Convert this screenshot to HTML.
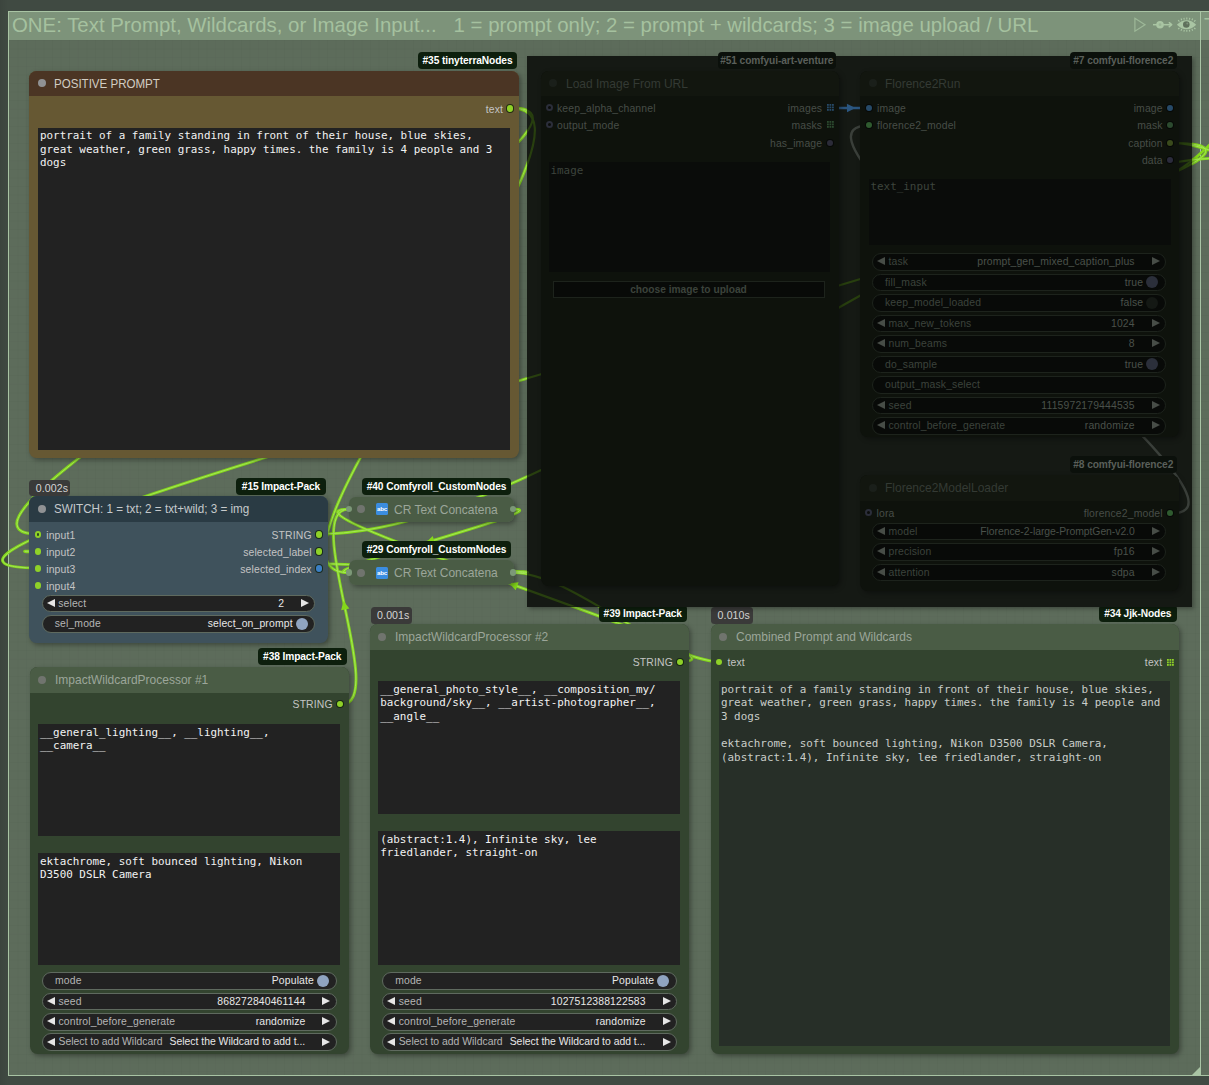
<!DOCTYPE html>
<html lang="en">
<head>
<meta charset="utf-8">
<title>ComfyUI workflow</title>
<style>
*{box-sizing:border-box;margin:0;padding:0}
html,body{width:1209px;height:1085px;overflow:hidden}
body{position:relative;font-family:"Liberation Sans",Arial,sans-serif;background:#3f4842;color:#ddd}
#canvas{position:absolute;left:0;top:0;width:1209px;height:1085px;overflow:hidden;
 background:linear-gradient(90deg,#3c453e 0,#404a42 8px,#404a42 100%)}
.group{position:absolute;background:#5d6c5b;border:1px solid #a9c4a4}
.group .gt{position:absolute;left:0;top:0;right:0;height:28px;background:#7d937a}
.group .gtxt{position:absolute;left:3px;top:-1px;font-size:20.4px;line-height:28px;color:#a5c19f;white-space:pre}
.grid{position:absolute;left:0;top:0;right:0;bottom:0;
 background-image:linear-gradient(rgba(0,0,0,.02) 1px,transparent 1px),linear-gradient(90deg,rgba(0,0,0,.02) 1px,transparent 1px);
 background-size:8.6px 8.6px}
.node{position:absolute;border-radius:7.5px;box-shadow:2px 2px 5px rgba(0,0,0,.35)}
.node .title{position:absolute;left:0;top:0;right:0;height:25.5px;border-radius:7.5px 7.5px 0 0}
.node.col{border-radius:6.5px}
.node.col .title{border-radius:6.5px;height:25.3px}
.node.col .title .dot{left:8.6px;background:#6e6e6a}
.node.grn .title .tt{color:#9ca69a}
.node.grn .title .dot{background:#70746e}
.node .title .dot{position:absolute;left:8.7px;top:8.7px;width:8px;height:8px;border-radius:50%;background:#909294}
.node .title .tt{position:absolute;left:25px;top:0;line-height:26px;font-size:12.7px;color:#c2c2c2;white-space:nowrap;display:inline-block;transform:scaleX(.945);transform-origin:0 50%}
.slot{position:absolute;font-size:10.4px;line-height:12px;color:#c4c4c4;white-space:nowrap;letter-spacing:.15px}
.slot.r{text-align:right}
.sd.in{width:6.4px;height:6.4px;margin:.3px;box-shadow:none}
.sd{position:absolute;width:7px;height:7px;border-radius:50%;background:#8fd128;box-shadow:0 0 0 1px rgba(14,30,8,.75);width:6.2px;height:6.2px;margin:.4px}
.ta{position:absolute;background:#222;color:#f2f2f2;font-family:"DejaVu Sans Mono","Liberation Mono",monospace;font-size:10.9px;line-height:13.6px;padding:1.6px 2px;white-space:pre;overflow:hidden}
.w{position:absolute;height:17.5px;border-radius:9px;background:#222;border:1px solid #5f6a5f;font-size:10.4px;line-height:15.5px;color:#b5b5b5;white-space:nowrap;letter-spacing:.15px}
.w .l{position:absolute;left:15.5px;top:0}
.w.t .l{left:12px}
.w .v{position:absolute;right:30px;top:0;color:#e8e8e8}
.w .al,.w .ar{position:absolute;top:3.3px;width:0;height:0;border-top:4.5px solid transparent;border-bottom:4.5px solid transparent}
.w .al{left:4.2px;border-right:8.5px solid #e6e6e6}
.w .ar{right:5.2px;border-left:8.5px solid #e6e6e6}
.w.t .v{right:21.5px}
.w .tg{position:absolute;right:6.5px;top:1.7px;width:12px;height:12px;border-radius:50%;background:#8fa3c0}
.badge{position:absolute;height:17px;border-radius:4px;background:#0d1f0d;color:#fff;font-size:10.2px;font-weight:bold;line-height:17px;text-align:center;white-space:nowrap;letter-spacing:-.1px}
.time{position:absolute;height:16.5px;border-radius:3.5px;background:#3a3a39;color:#d4d4d4;font-size:10.6px;line-height:16px;text-align:left;padding-left:6.6px;white-space:nowrap;letter-spacing:.1px}
.dim .title .tt{color:#343a34}
.dim .title .dot{background:#1a1f1a}
.dim .slot{color:#474d47}
.dim .sd{box-shadow:0 0 0 1px #070907;width:6px;height:6px;margin:.5px}
.dim .w{background:#080a08;border-color:#1d231c;color:#3c433c}
.dim .w .v{color:#4a514a}
.dim .w .al{border-right-color:#474d47}
.dim .w .ar{border-left-color:#474d47}
.dim .w .tg{background:#2b2f3a}
.dim .ta{background:#0a0c0a;color:#3d443d}
</style>
</head>
<body>
<div id="canvas">
<div class="group" style="left:8px;top:11px;width:1193px;height:1065px">
 <div class="grid" style="top:28px"></div>
 <div class="gt"></div>
 <div class="gtxt">ONE: Text Prompt, Wildcards, or Image Input...   1 = prompt only; 2 = prompt + wildcards; 3 = image upload / URL</div>
 <svg width="70" height="20" viewBox="1130 15 70 20" style="position:absolute;left:1121px;top:3px" fill="none">
<path d="M1134.9 18.3L1145 24.7L1134.9 31.2Z" stroke="#9db898" stroke-width="1.2" stroke-linejoin="miter"/>
<path d="M1153 24.7H1171" stroke="#a9c5a3" stroke-width="1.5"/>
<path d="M1169.3 22.7L1171.7 24.7L1169.3 26.7" stroke="#a9c5a3" stroke-width="1.5" stroke-linecap="round" stroke-linejoin="round"/>
<circle cx="1160" cy="24.7" r="3.8" fill="#a9c5a3"/>
<circle cx="1160" cy="24.7" r="1.4" fill="#98b393"/>
<g stroke="#a9c5a3" stroke-width="1.1" stroke-linecap="butt">
<path d="M1179.4 21.6L1178.2 20.2M1181.8 20.3L1181 18.6M1184.3 19.6L1183.9 17.8M1186.8 19.4V17.6M1189.4 19.6L1189.8 17.8M1191.9 20.3L1192.7 18.6M1194.2 21.6L1195.4 20.2"/>
<path d="M1179.4 27.8L1178.2 29.2M1181.8 29.1L1181 30.8M1184.3 29.8L1183.9 31.6M1186.8 30V31.8M1189.4 29.8L1189.8 31.6M1191.9 29.1L1192.7 30.8M1194.2 27.8L1195.4 29.2"/>
</g>
<path d="M1176.9 24.7C1180 21.4 1183.3 20.2 1186.6 20.2C1189.9 20.2 1193.2 21.4 1196.2 24.7C1193.2 28 1189.9 29.2 1186.6 29.2C1183.3 29.2 1180 28 1176.9 24.7Z" fill="#a9c5a3"/>
<circle cx="1186.3" cy="24.5" r="3.3" fill="#5f705c"/>
<circle cx="1187.3" cy="23.5" r="1" fill="#7d927a"/>
</svg>

 <div style="position:absolute;right:0;bottom:0;width:0;height:0;border-left:8.5px solid transparent;border-bottom:8.5px solid #a9c4a4"></div>
</div>
<div class="group" style="left:1201px;top:11px;width:40px;height:1065px;border-left:none">
 <div class="grid" style="top:28px"></div>
 <div class="gt"></div>
 <div class="gtxt">T</div>
</div>
<svg width="1209" height="1085" viewBox="0 0 1209 1085" style="position:absolute;left:0;top:0;" fill="none" stroke-linecap="round"><g stroke="#84d81a" stroke-width="2.8"><path d="M511.5 108.0C670.7 108.0 -121.2 534.0 38.0 534.0"/><path d="M511.5 108.0C634.6 108.0 225.4 572.7 348.5 572.7"/><path d="M341.0 704.5C389.9 704.5 299.6 509.2 348.5 509.2"/><path d="M681.0 661.5C772.4 661.5 257.1 509.2 348.5 509.2"/><path d="M514.5 509.2C558.9 509.2 304.1 572.7 348.5 572.7"/><path d="M514.5 572.7C633.7 572.7 -81.2 551.0 38.0 551.0"/><path d="M514.5 572.7C570.4 572.7 663.6 661.5 719.5 661.5"/><path d="M1170.5 143.0C1472.9 143.0 -264.4 568.0 38.0 568.0"/><path d="M320.5 534.0C564.7 534.0 977.8 158.0 1222.0 158.0"/><path d="M1170.5 143.0C1339.0 143.0 1531.5 560.0 1700.0 560.0"/><path d="M1150 186Q1192 166 1216 138"/></g><g stroke="#a4e45a" stroke-width="1.0"><path d="M511.5 108.0C670.7 108.0 -121.2 534.0 38.0 534.0"/><path d="M511.5 108.0C634.6 108.0 225.4 572.7 348.5 572.7"/><path d="M341.0 704.5C389.9 704.5 299.6 509.2 348.5 509.2"/><path d="M681.0 661.5C772.4 661.5 257.1 509.2 348.5 509.2"/><path d="M514.5 509.2C558.9 509.2 304.1 572.7 348.5 572.7"/><path d="M514.5 572.7C633.7 572.7 -81.2 551.0 38.0 551.0"/><path d="M514.5 572.7C570.4 572.7 663.6 661.5 719.5 661.5"/><path d="M1170.5 143.0C1472.9 143.0 -264.4 568.0 38.0 568.0"/><path d="M320.5 534.0C564.7 534.0 977.8 158.0 1222.0 158.0"/><path d="M1170.5 143.0C1339.0 143.0 1531.5 560.0 1700.0 560.0"/></g><g fill="#84d81a" stroke="none"><polygon points="274.5,316.1 269.8,324.3 279.2,323.1"/><polygon points="427.7,336.0 426.9,345.4 435.0,340.4"/><polygon points="349.4,608.5 343.5,601.0 341.1,610.2"/><polygon points="518.6,582.2 509.2,583.3 515.7,590.2"/><polygon points="432.7,536.1 425.8,542.7 435.2,544.3"/><polygon points="279.0,557.7 270.3,561.6 278.6,566.2"/><polygon points="612.6,619.4 622.1,620.1 617.0,612.1"/><polygon points="605.5,350.7 598.5,357.2 607.9,358.9"/><polygon points="771.1,351.0 776.4,343.0 766.9,343.6"/><polygon points="1430.4,352.4 1439.1,356.0 1436.8,346.8"/></g></svg>

<div class="node " style="left:29.2px;top:70.5px;width:490.2px;height:387.5px;background:#665833"><div class="title" style="background:#4b3524"><span class="dot"></span><span class="tt" style="transform:scaleX(.91);color:#d2cdc3">POSITIVE PROMPT</span></div><span class="sd" style="left:477.7px;top:34.5px;background:#8fd128"></span><span class="slot r" style="right:16.3px;top:33.0px">text</span><div class="ta" style="left:8.8px;top:57px;width:471.8px;height:322.5px;">portrait of a family standing in front of their house, blue skies,
great weather, green grass, happy times. the family is 4 people and 3
dogs</div></div>
<div class="badge" style="left:418px;top:52px;width:99px;">#35 tinyterraNodes</div>
<div class="node " style="left:29.2px;top:496px;width:298.8px;height:146.5px;background:#3f525c"><div class="title" style="background:#2a3b44"><span class="dot"></span><span class="tt" style="transform:scaleX(.92);color:#c6cacc">SWITCH: 1 = txt; 2 = txt+wild; 3 = img</span></div><span class="sd in" style="left:5.5px;top:35px;background:#8fd128;"></span><span class="slot" style="left:17px;top:33.5px">input1</span><span style="position:absolute;left:7.6px;top:37.2px;width:2.6px;height:2.6px;border-radius:50%;background:#2a4a1a"></span><span class="sd in" style="left:5.5px;top:52px;background:#8fd128;"></span><span class="slot" style="left:17px;top:50.5px">input2</span><span class="sd in" style="left:5.5px;top:69px;background:#8fd128;"></span><span class="slot" style="left:17px;top:67.5px">input3</span><span class="sd in" style="left:5.5px;top:86px;background:#8fd128;"></span><span class="slot" style="left:17px;top:84.5px">input4</span><span class="sd" style="left:286.0px;top:35px;background:#8fd128"></span><span class="slot r" style="right:16.3px;top:33.5px">STRING</span><span class="sd" style="left:286.0px;top:52px;background:#8fd128"></span><span class="slot r" style="right:16.3px;top:50.5px">selected_label</span><span class="sd" style="left:286.0px;top:69px;background:#3b7fc4"></span><span class="slot r" style="right:16.3px;top:67.5px">selected_index</span><div class="w" style="left:12.5px;top:98.5px;width:273.5px"><i class="al"></i><span class="l">select</span><span class="v">2</span><i class="ar"></i></div><div class="w t" style="left:12.5px;top:119px;width:273.5px"><span class="l">sel_mode</span><span class="v">select_on_prompt</span><i class="tg"></i></div></div>
<div class="badge" style="left:236px;top:478px;width:90px;">#15 Impact-Pack</div>
<div class="time" style="left:29.2px;top:479.5px;width:41px">0.002s</div>
<div class="node col grn" style="left:348.5px;top:496.6px;width:165.5px;height:25.3px;background:transparent"><div class="title" style="background:#4a5c45"><span class="dot"></span><span class="tt" style="left:45.5px">CR Text Concatena</span></div><span style="position:absolute;left:-2.9px;top:9.4px;width:6.4px;height:6.4px;border-radius:50%;background:#7c9878"></span><span style="position:absolute;right:-2.2px;top:9.4px;width:6.4px;height:6.4px;border-radius:50%;background:#7c9878"></span><span style="position:absolute;left:27.5px;top:6.8px;width:12px;height:12px;background:#3b8de0;border-radius:1.5px;color:#fff;font-size:6.2px;font-weight:bold;line-height:11.5px;text-align:center;letter-spacing:-.3px">abc</span></div>
<div class="badge" style="left:362px;top:478px;width:149px;">#40 Comfyroll_CustomNodes</div>
<div class="node col grn" style="left:348.5px;top:560.1px;width:165.5px;height:25.3px;background:transparent"><div class="title" style="background:#4a5c45"><span class="dot"></span><span class="tt" style="left:45.5px">CR Text Concatena</span></div><span style="position:absolute;left:-2.9px;top:9.4px;width:6.4px;height:6.4px;border-radius:50%;background:#7c9878"></span><span style="position:absolute;right:-2.2px;top:9.4px;width:6.4px;height:6.4px;border-radius:50%;background:#7c9878"></span><span style="position:absolute;left:27.5px;top:6.8px;width:12px;height:12px;background:#3b8de0;border-radius:1.5px;color:#fff;font-size:6.2px;font-weight:bold;line-height:11.5px;text-align:center;letter-spacing:-.3px">abc</span></div>
<div class="badge" style="left:362px;top:541px;width:149px;">#29 Comfyroll_CustomNodes</div>
<div class="node grn" style="left:29.5px;top:667px;width:319.5px;height:387px;background:#33442f"><div class="title" style="background:#4a5c45"><span class="dot"></span><span class="tt" style="">ImpactWildcardProcessor #1</span></div><span class="sd" style="left:307.0px;top:33.9px;background:#8fd128"></span><span class="slot r" style="right:16.3px;top:32.4px">STRING</span><div class="ta" style="left:8.5px;top:57px;width:302px;height:111.5px;">__general_lighting__, __lighting__,
__camera__</div><div class="ta" style="left:8.5px;top:186px;width:302px;height:111.5px;">ektachrome, soft bounced lighting, Nikon
D3500 DSLR Camera</div><div class="w t" style="left:12.5px;top:305.2px;width:294.5px"><span class="l">mode</span><span class="v">Populate</span><i class="tg"></i></div><div class="w" style="left:12.5px;top:325.6px;width:294.5px"><i class="al"></i><span class="l">seed</span><span class="v">868272840461144</span><i class="ar"></i></div><div class="w" style="left:12.5px;top:346px;width:294.5px"><i class="al"></i><span class="l">control_before_generate</span><span class="v">randomize</span><i class="ar"></i></div><div class="w" style="left:12.5px;top:366.4px;width:294.5px"><i class="al"></i><span class="l" style="letter-spacing:0">Select to add Wildcard</span><span class="v" style="right:auto;left:126.5px;letter-spacing:0">Select the Wildcard to add t...</span><i class="ar"></i></div></div>
<div class="badge" style="left:258px;top:648px;width:88.5px;">#38 Impact-Pack</div>
<div class="node grn" style="left:369.7px;top:624px;width:319.5px;height:430px;background:#33442f"><div class="title" style="background:#4a5c45"><span class="dot"></span><span class="tt" style="">ImpactWildcardProcessor #2</span></div><span class="sd" style="left:307.0px;top:34.5px;background:#8fd128"></span><span class="slot r" style="right:16.3px;top:33.0px">STRING</span><div class="ta" style="left:8.5px;top:57px;width:302px;height:132.5px;">__general_photo_style__, __composition_my/
background/sky__, __artist-photographer__,
__angle__</div><div class="ta" style="left:8.5px;top:207px;width:302px;height:133.5px;">(abstract:1.4), Infinite sky, lee
friedlander, straight-on</div><div class="w t" style="left:12.5px;top:348.2px;width:294.5px"><span class="l">mode</span><span class="v">Populate</span><i class="tg"></i></div><div class="w" style="left:12.5px;top:368.6px;width:294.5px"><i class="al"></i><span class="l">seed</span><span class="v">1027512388122583</span><i class="ar"></i></div><div class="w" style="left:12.5px;top:389px;width:294.5px"><i class="al"></i><span class="l">control_before_generate</span><span class="v">randomize</span><i class="ar"></i></div><div class="w" style="left:12.5px;top:409.4px;width:294.5px"><i class="al"></i><span class="l" style="letter-spacing:0">Select to add Wildcard</span><span class="v" style="right:auto;left:126.5px;letter-spacing:0">Select the Wildcard to add t...</span><i class="ar"></i></div></div>
<div class="badge" style="left:598.5px;top:605px;width:88.5px;">#39 Impact-Pack</div>
<div class="time" style="left:370.5px;top:607px;width:41.5px">0.001s</div>
<div class="node grn" style="left:710.5px;top:624px;width:468px;height:430px;background:#33442f"><div class="title" style="background:#4a5c45"><span class="dot"></span><span class="tt" style="">Combined Prompt and Wildcards</span></div><span class="sd in" style="left:5px;top:34.5px;background:#8fd128;"></span><span class="slot" style="left:17px;top:33.0px">text</span><svg width="8" height="8" viewBox="0 0 8 8" style="position:absolute;left:456.6px;top:34.5px" fill="#8fd128"><rect x="0.0" y="0.0" width="1.8" height="1.8"/><rect x="0.0" y="2.5" width="1.8" height="1.8"/><rect x="0.0" y="5.0" width="1.8" height="1.8"/><rect x="2.5" y="0.0" width="1.8" height="1.8"/><rect x="2.5" y="2.5" width="1.8" height="1.8"/><rect x="2.5" y="5.0" width="1.8" height="1.8"/><rect x="5.0" y="0.0" width="1.8" height="1.8"/><rect x="5.0" y="2.5" width="1.8" height="1.8"/><rect x="5.0" y="5.0" width="1.8" height="1.8"/></svg><span class="slot r" style="right:16.3px;top:33.0px">text</span><div class="ta" style="left:8.5px;top:57px;width:451px;height:365px;background:#272f28;color:#c9cdc9">portrait of a family standing in front of their house, blue skies,
great weather, green grass, happy times. the family is 4 people and
3 dogs

ektachrome, soft bounced lighting, Nikon D3500 DSLR Camera,
(abstract:1.4), Infinite sky, lee friedlander, straight-on</div></div>
<div class="badge" style="left:1098.5px;top:605px;width:78.5px;">#34 Jjk-Nodes</div>
<div class="time" style="left:711px;top:607px;width:41.5px">0.010s</div>
<div style="position:absolute;left:527px;top:56px;width:665px;height:550.5px;background:#151914;box-shadow:2px 2px 4px rgba(0,0,0,.3)"></div>
<svg width="1209" height="1085" viewBox="0 0 1209 1085" style="position:absolute;left:0;top:0;clip-path:inset(56px 17px 478.5px 527px)" fill="none" stroke-linecap="round"><g stroke="#283f0f" stroke-width="2.2"><path d="M511.5 108.0C670.7 108.0 -121.2 534.0 38.0 534.0"/><path d="M511.5 108.0C634.6 108.0 225.4 572.7 348.5 572.7"/><path d="M341.0 704.5C389.9 704.5 299.6 509.2 348.5 509.2"/><path d="M681.0 661.5C772.4 661.5 257.1 509.2 348.5 509.2"/><path d="M514.5 509.2C558.9 509.2 304.1 572.7 348.5 572.7"/><path d="M514.5 572.7C633.7 572.7 -81.2 551.0 38.0 551.0"/><path d="M514.5 572.7C570.4 572.7 663.6 661.5 719.5 661.5"/><path d="M1170.5 143.0C1472.9 143.0 -264.4 568.0 38.0 568.0"/><path d="M320.5 534.0C564.7 534.0 977.8 158.0 1222.0 158.0"/><path d="M1170.5 143.0C1339.0 143.0 1531.5 560.0 1700.0 560.0"/><path d="M1150 186Q1192 166 1216 138"/></g><g fill="#283f0f" stroke="none"><polygon points="274.5,316.1 269.8,324.3 279.2,323.1"/><polygon points="427.7,336.0 426.9,345.4 435.0,340.4"/><polygon points="349.4,608.5 343.5,601.0 341.1,610.2"/><polygon points="518.6,582.2 509.2,583.3 515.7,590.2"/><polygon points="432.7,536.1 425.8,542.7 435.2,544.3"/><polygon points="279.0,557.7 270.3,561.6 278.6,566.2"/><polygon points="612.6,619.4 622.1,620.1 617.0,612.1"/><polygon points="605.5,350.7 598.5,357.2 607.9,358.9"/><polygon points="771.1,351.0 776.4,343.0 766.9,343.6"/><polygon points="1430.4,352.4 1439.1,356.0 1436.8,346.8"/></g></svg>
<svg width="1209" height="1085" viewBox="0 0 1209 1085" style="position:absolute;left:0;top:0" fill="none" stroke-linecap="round"><path d="M1170.5 513.5C1293.3 513.5 746.2 125.5 869.0 125.5" stroke="#3a3f3a" stroke-width="2.4"/><polygon points="1024.5,318.1 1015.4,315.5 1018.8,324.4" fill="#3a3f3a"/><path d="M830.0 108.0C839.8 108.0 859.2 108.0 869.0 108.0" stroke="#2b5680" stroke-width="2.6"/><polygon points="847.0,112.3 855.5,108.0 846.9,103.8" fill="#2b5680"/></svg>
<div class="dim">
<div class="node " style="left:540.5px;top:70.5px;width:298px;height:515px;background:#0e120c"><div class="title" style="background:#12160f"><span class="dot"></span><span class="tt" style="">Load Image From URL</span></div><span class="sd" style="left:5px;top:33.7px;background:#0b0d0b;border:2.4px solid #2b2e3a;box-shadow:none;width:7px;height:7px;margin:0"></span><span class="slot" style="left:16.5px;top:32.2px">keep_alpha_channel</span><span class="sd" style="left:5px;top:50.7px;background:#0b0d0b;border:2.4px solid #2b2e3a;box-shadow:none;width:7px;height:7px;margin:0"></span><span class="slot" style="left:16.5px;top:49.2px">output_mode</span><svg width="8" height="8" viewBox="0 0 8 8" style="position:absolute;left:286.6px;top:33.7px" fill="#274a68"><rect x="0.0" y="0.0" width="1.8" height="1.8"/><rect x="0.0" y="2.5" width="1.8" height="1.8"/><rect x="0.0" y="5.0" width="1.8" height="1.8"/><rect x="2.5" y="0.0" width="1.8" height="1.8"/><rect x="2.5" y="2.5" width="1.8" height="1.8"/><rect x="2.5" y="5.0" width="1.8" height="1.8"/><rect x="5.0" y="0.0" width="1.8" height="1.8"/><rect x="5.0" y="2.5" width="1.8" height="1.8"/><rect x="5.0" y="5.0" width="1.8" height="1.8"/></svg><span class="slot r" style="right:16.3px;top:32.2px">images</span><svg width="8" height="8" viewBox="0 0 8 8" style="position:absolute;left:286.6px;top:50.7px" fill="#2c4a2f"><rect x="0.0" y="0.0" width="1.8" height="1.8"/><rect x="0.0" y="2.5" width="1.8" height="1.8"/><rect x="0.0" y="5.0" width="1.8" height="1.8"/><rect x="2.5" y="0.0" width="1.8" height="1.8"/><rect x="2.5" y="2.5" width="1.8" height="1.8"/><rect x="2.5" y="5.0" width="1.8" height="1.8"/><rect x="5.0" y="0.0" width="1.8" height="1.8"/><rect x="5.0" y="2.5" width="1.8" height="1.8"/><rect x="5.0" y="5.0" width="1.8" height="1.8"/></svg><span class="slot r" style="right:16.3px;top:49.2px">masks</span><span class="sd" style="left:285.5px;top:68.7px;background:#2b2b38"></span><span class="slot r" style="right:16.3px;top:67.2px">has_image</span><div class="ta" style="left:8px;top:91.5px;width:281px;height:110px;">image</div><div class="w" style="left:12px;top:210.5px;width:272px;height:16.5px;border-radius:0;text-align:center;line-height:15px;font-weight:bold;font-size:10.2px;letter-spacing:0">choose image to upload</div></div>
<div class="badge" style="left:717.5px;top:52px;width:118.5px;background:#0b100b;color:#5a5f5a">#51 comfyui-art-venture</div>
<div class="node " style="left:860px;top:70.5px;width:319px;height:366px;background:#0e120c"><div class="title" style="background:#12160f"><span class="dot"></span><span class="tt" style="">Florence2Run</span></div><span class="sd in" style="left:5.5px;top:33.7px;background:#274a68;"></span><span class="slot" style="left:17px;top:32.2px">image</span><span class="sd in" style="left:5.5px;top:50.7px;background:#2f5a2f;"></span><span class="slot" style="left:17px;top:49.2px">florence2_model</span><span class="sd" style="left:306.5px;top:33.7px;background:#274a68"></span><span class="slot r" style="right:16.3px;top:32.2px">image</span><span class="sd" style="left:306.5px;top:50.7px;background:#2c4a2f"></span><span class="slot r" style="right:16.3px;top:49.2px">mask</span><span class="sd" style="left:306.5px;top:68.7px;background:#3a4a1c"></span><span class="slot r" style="right:16.3px;top:67.2px">caption</span><span class="sd" style="left:306.5px;top:85.7px;background:#2b2b3c"></span><span class="slot r" style="right:16.3px;top:84.2px">data</span><div class="ta" style="left:8.5px;top:108.2px;width:302px;height:66.3px;">text_input</div><div class="w" style="left:12px;top:182.5px;width:293.7px"><i class="al"></i><span class="l">task</span><span class="v">prompt_gen_mixed_caption_plus</span><i class="ar"></i></div><div class="w t" style="left:12px;top:203px;width:293.7px"><span class="l">fill_mask</span><span class="v">true</span><i class="tg"></i></div><div class="w t" style="left:12px;top:223.5px;width:293.7px"><span class="l">keep_model_loaded</span><span class="v">false</span><i class="tg" style="background:#141814"></i></div><div class="w" style="left:12px;top:244px;width:293.7px"><i class="al"></i><span class="l">max_new_tokens</span><span class="v">1024</span><i class="ar"></i></div><div class="w" style="left:12px;top:264.5px;width:293.7px"><i class="al"></i><span class="l">num_beams</span><span class="v">8</span><i class="ar"></i></div><div class="w t" style="left:12px;top:285px;width:293.7px"><span class="l">do_sample</span><span class="v">true</span><i class="tg"></i></div><div class="w t" style="left:12px;top:305.5px;width:293.7px"><span class="l">output_mask_select</span></div><div class="w" style="left:12px;top:326px;width:293.7px"><i class="al"></i><span class="l">seed</span><span class="v">1115972179444535</span><i class="ar"></i></div><div class="w" style="left:12px;top:346.5px;width:293.7px"><i class="al"></i><span class="l">control_before_generate</span><span class="v">randomize</span><i class="ar"></i></div></div>
<div class="badge" style="left:1070px;top:52px;width:106.5px;background:#0b100b;color:#5a5f5a">#7 comfyui-florence2</div>
<div class="node " style="left:860px;top:475px;width:319px;height:116px;background:#0e120c"><div class="title" style="background:#12160f"><span class="dot"></span><span class="tt" style="">Florence2ModelLoader</span></div><span class="sd" style="left:5px;top:34.2px;background:#0b0d0b;border:2.4px solid #2b2e3a;box-shadow:none;width:7px;height:7px;margin:0"></span><span class="slot" style="left:16.5px;top:32.7px">lora</span><span class="sd" style="left:306.5px;top:34.2px;background:#2f5a2f"></span><span class="slot r" style="right:16.3px;top:32.7px">florence2_model</span><div class="w" style="left:12px;top:47.5px;width:293.7px"><i class="al"></i><span class="l">model</span><span class="v" style="letter-spacing:-.05px">Florence-2-large-PromptGen-v2.0</span><i class="ar"></i></div><div class="w" style="left:12px;top:68px;width:293.7px"><i class="al"></i><span class="l">precision</span><span class="v">fp16</span><i class="ar"></i></div><div class="w" style="left:12px;top:88.5px;width:293.7px"><i class="al"></i><span class="l">attention</span><span class="v">sdpa</span><i class="ar"></i></div></div>
<div class="badge" style="left:1070px;top:456px;width:106.5px;background:#0b100b;color:#5a5f5a">#8 comfyui-florence2</div>
</div>

<!--LINKS_OVER-->
</div>
</body>
</html>
